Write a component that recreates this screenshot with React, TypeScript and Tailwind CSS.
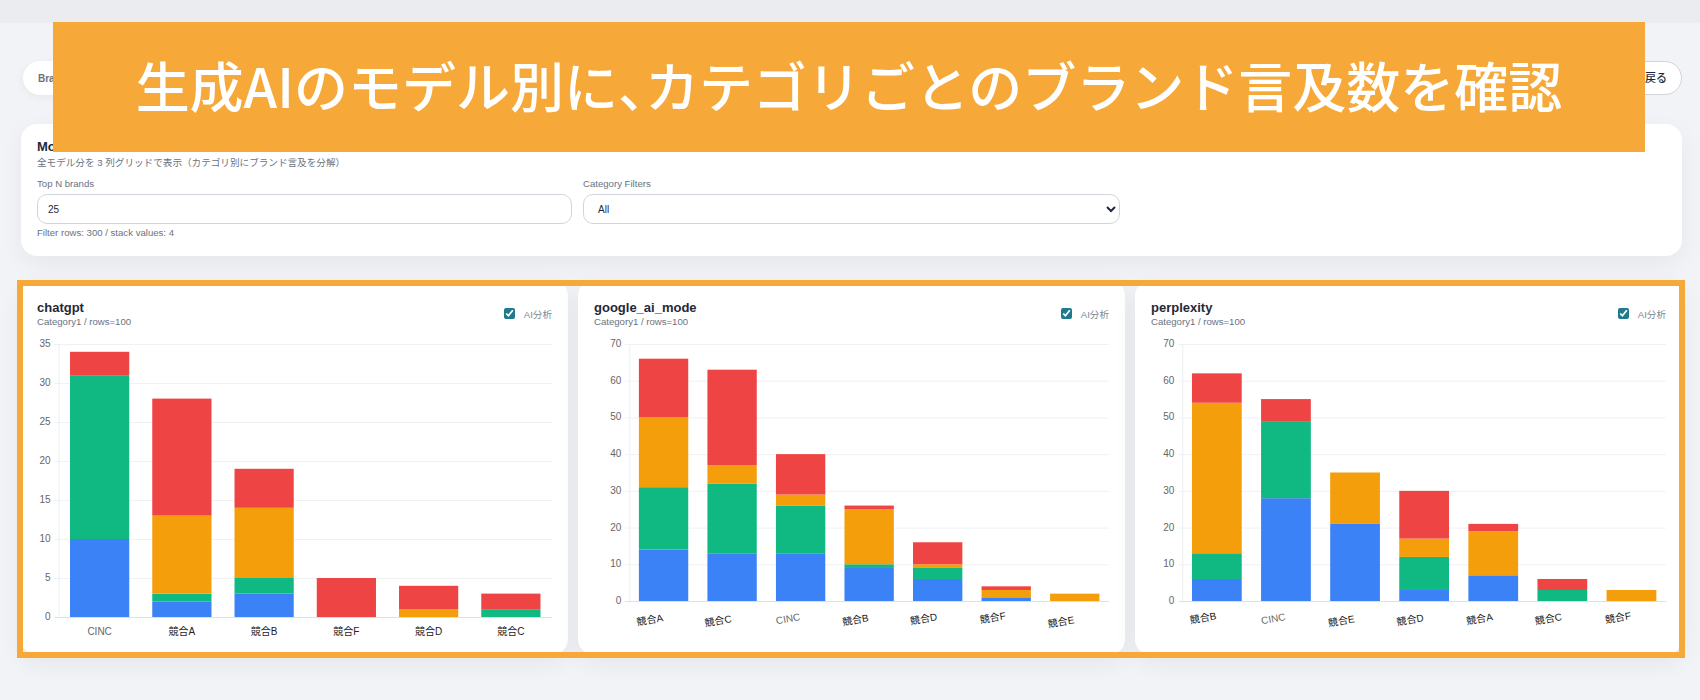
const FONT = "font-['Liberation_Sans','Noto_Sans_CJK_JP',sans-serif]";

const COLORS = ["#3b82f6", "#10b981", "#f59e0b", "#ef4444"];

interface Bar {
  label: string;
  values: number[];
  dy?: number;
}

interface ChartData {
  title: string;
  max: number;
  step: number;
  left: number;
  bottom: number;
  rotated: boolean;
  bars: Bar[];
}

const charts: ChartData[] = [
  {
    title: "chatgpt",
    max: 35,
    step: 5,
    left: 21.5,
    bottom: 287,
    rotated: false,
    bars: [
      { label: "CINC", values: [10, 21, 0, 3] },
      { label: "競合A", values: [2, 1, 10, 15] },
      { label: "競合B", values: [3, 2, 9, 5] },
      { label: "競合F", values: [0, 0, 0, 5] },
      { label: "競合D", values: [0, 0, 1, 3] },
      { label: "競合C", values: [0, 1, 0, 2] },
    ],
  },
  {
    title: "google_ai_mode",
    max: 70,
    step: 10,
    left: 35.3,
    bottom: 271,
    rotated: true,
    bars: [
      { label: "競合A", values: [14, 17, 19, 16], dy: 0 },
      { label: "競合C", values: [13, 19, 5, 26], dy: 1 },
      { label: "CINC", values: [13, 13, 3, 11], dy: -1 },
      { label: "競合B", values: [9, 1, 15, 1], dy: 0 },
      { label: "競合D", values: [6, 3, 1, 6], dy: -1 },
      { label: "競合F", values: [1, 0, 2, 1], dy: -2 },
      { label: "競合E", values: [0, 0, 2, 0], dy: 2 },
    ],
  },
  {
    title: "perplexity",
    max: 70,
    step: 10,
    left: 31.3,
    bottom: 271,
    rotated: true,
    bars: [
      { label: "競合B", values: [6, 7, 41, 8], dy: -2 },
      { label: "CINC", values: [28, 21, 0, 6], dy: -1 },
      { label: "競合E", values: [21, 0, 14, 0], dy: 1 },
      { label: "競合D", values: [3, 9, 5, 13], dy: 0 },
      { label: "競合A", values: [7, 0, 12, 2], dy: -1 },
      { label: "競合C", values: [0, 3, 0, 3], dy: -1 },
      { label: "競合F", values: [0, 0, 3, 0], dy: -2 },
    ],
  },
];

function StackedChart({ chart }: { chart: ChartData }) {
  const width = 515;
  const top = 14;
  const plotH = chart.bottom - top;
  const catW = (width - chart.left) / chart.bars.length;
  const barW = catW * 0.72;
  const ticks: number[] = [];
  for (let v = 0; v <= chart.max; v += chart.step) ticks.push(v);
  const toY = (v: number) => chart.bottom - (v / chart.max) * plotH;

  return (
    <svg width={width} height={325} className="block" fontSize={10}>
      {ticks.map((t) => (
        <g key={t}>
          <line
            x1={chart.left - 4}
            x2={width}
            y1={toY(t) + 0.5}
            y2={toY(t) + 0.5}
            stroke={t === 0 ? "#dde0e5" : "#eff1f3"}
          />
          <text x={chart.left - 8} y={toY(t) + 3} textAnchor="end" fill="#666666">
            {t}
          </text>
        </g>
      ))}
      <line x1={chart.left + 0.5} x2={chart.left + 0.5} y1={top} y2={chart.bottom} stroke="#eceef1" />
      {chart.bars.map((bar, i) => {
        const cx = chart.left + catW * (i + 0.5);
        let sum = 0;
        return (
          <g key={bar.label}>
            {bar.values.map((v, j) => {
              if (v === 0) return null;
              const y = toY(sum + v);
              sum += v;
              return <rect key={j} x={cx - barW / 2} y={y} width={barW} height={(v / chart.max) * plotH} fill={COLORS[j]} />;
            })}
            {chart.rotated ? (
              <text
                transform={`translate(${cx} ${chart.bottom + 20 + (bar.dy ?? 0)}) rotate(-10)`}
                textAnchor="end"
                fill={bar.label === "CINC" ? "#666666" : "#222222"}
              >
                {bar.label}
              </text>
            ) : (
              <text x={cx} y={chart.bottom + 18} textAnchor="middle" fill={bar.label === "CINC" ? "#666666" : "#222222"}>
                {bar.label}
              </text>
            )}
          </g>
        );
      })}
    </svg>
  );
}

function ChartCard({ chart }: { chart: ChartData }) {
  return (
    <div className="h-[375px] rounded-2xl bg-white px-4 pt-5 shadow-[0_8px_24px_rgba(15,23,42,0.06)]">
      <div className="flex h-[30px] items-start justify-between">
        <div>
          <div className="text-[13px] leading-4 font-bold text-[#1f2937]">{chart.title}</div>
          <div className="text-[9.6px] leading-3 text-[#6b7280]">Category1 / rows=100</div>
        </div>
        <label className="flex items-center gap-[9px] pt-[5px] text-[9.6px] leading-3 text-[#7b8794]">
          <input type="checkbox" defaultChecked className="m-0 h-[11px] w-[11px] accent-[#1f7a8c]" />
          <span className="mt-[4px]">AI分析</span>
        </label>
      </div>
      <StackedChart chart={chart} />
    </div>
  );
}

export default function App() {
  return (
    <div className={`relative h-[700px] w-[1700px] overflow-hidden bg-[#f1f3f6] ${FONT}`}>
      <div className="h-[23px] bg-[#eaecf0]" />

      <div className="pr-[18px] pl-[21px]">
        <div className="mt-[38px] ml-[2px] flex h-[34px] items-center justify-between">
          <div className="flex h-full w-[300px] items-center rounded-full bg-white px-[15px] text-[10px] font-bold text-[#6b7280] shadow-[0_2px_8px_rgba(15,23,42,0.05)]">
            Brand Insights
          </div>
          <button className="flex h-full items-center rounded-full border border-[#d1d5db] bg-white px-[14px] text-[11px] font-medium text-[#1f2937]">
            サマリーへ戻る
          </button>
        </div>

        {/* Filters */}
        <div className="mt-[29px] h-[132px] rounded-2xl bg-white px-4 pt-[15px] shadow-[0_8px_24px_rgba(15,23,42,0.05)]">
          <div className="text-[13px] leading-4 font-bold text-[#1f2937]">Model Breakdown</div>
          <div className="mt-[2px] text-[9.6px] leading-3 text-[#6b7280]">全モデル分を 3 列グリッドで表示（カテゴリ別にブランド言及を分解）</div>
          <div className="mt-[9px] grid grid-cols-[535px_537px] gap-x-[11px]">
            <div>
              <div className="mb-[4px] text-[9.6px] leading-3 text-[#6b7280]">Top N brands</div>
              <input
                defaultValue="25"
                className="h-[30px] w-full rounded-[10px] border border-[#d1d5db] bg-white px-[10px] text-[10px] text-[#1f2937]"
              />
            </div>
            <div>
              <div className="mb-[4px] text-[9.6px] leading-3 text-[#6b7280]">Category Filters</div>
              <select className="h-[30px] w-full rounded-[10px] border border-[#d1d5db] bg-white px-[10px] text-[10px] text-[#1f2937]">
                <option>All</option>
              </select>
            </div>
          </div>
          <div className="mt-[3px] text-[9.6px] leading-3 text-[#6b7280]">Filter rows: 300 / stack values: 4</div>
        </div>

        {/* Charts */}
        <div className="mt-[24px] grid grid-cols-3 gap-[10px]">
          {charts.map((chart) => (
            <ChartCard key={chart.title} chart={chart} />
          ))}
        </div>
      </div>

      {/* Overlays */}
      <div className="absolute top-[22px] left-[53px] flex h-[130px] w-[1592px] items-center justify-center bg-[#f6a938] pb-[6px] font-['Noto_Sans_CJK_JP',sans-serif] text-[54px] font-medium text-white">
        <span>
          生成AIのモデル別に<span className="[font-feature-settings:'halt']">、</span>カテゴリごとのブランド言及数を確認
        </span>
      </div>
      <div className="absolute top-[280px] left-[17px] h-[378px] w-[1668px] border-[6px] border-[#f6a938]" />
    </div>
  );
}
